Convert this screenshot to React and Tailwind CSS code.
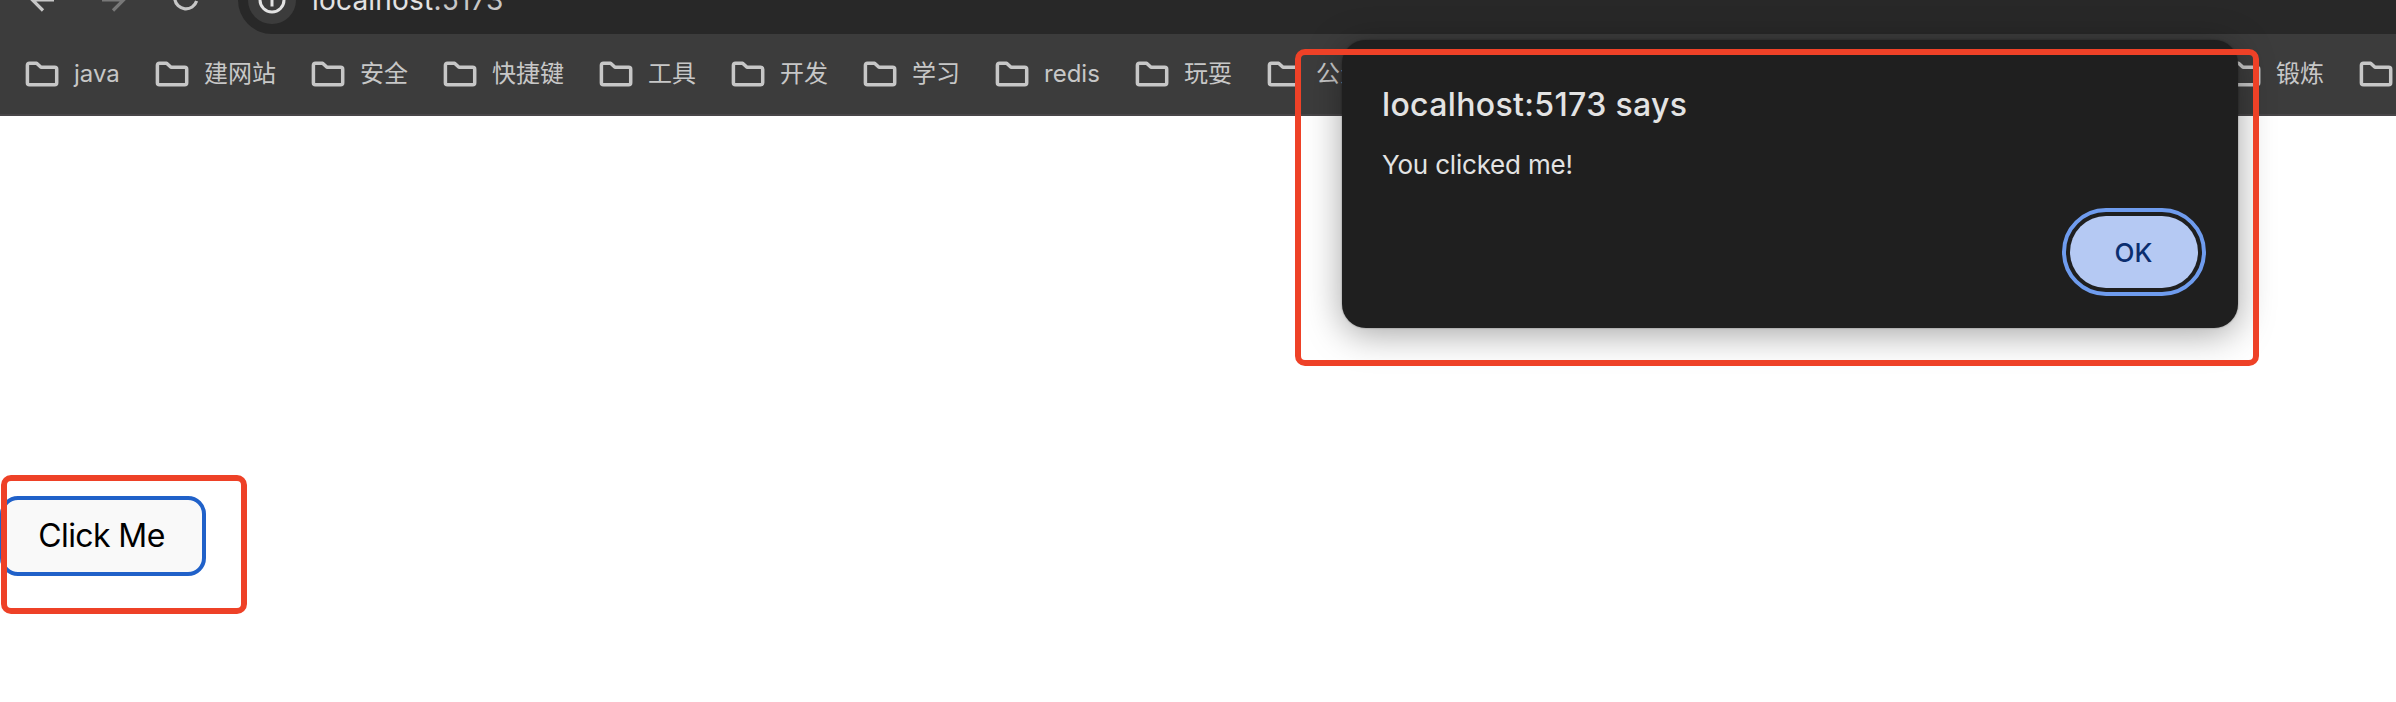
import React from 'react';

const bookmarks = [
  { label: 'java', width: 'w-[46px]' },
  { label: '建网站', width: 'w-[72px]' },
  { label: '安全', width: 'w-[48px]' },
  { label: '快捷键', width: 'w-[72px]' },
  { label: '工具', width: 'w-[48px]' },
  { label: '开发', width: 'w-[48px]' },
  { label: '学习', width: 'w-[48px]' },
  { label: 'redis', width: 'w-[56px]' },
  { label: '玩耍', width: 'w-[48px]' },
  { label: '公众', width: 'w-[48px]' },
];

function Folder() {
  return (
    <svg className="h-[26px] w-[34px] shrink-0" viewBox="0 0 34 26" fill="none" stroke="#c7c7c7" strokeWidth="3.5" strokeLinejoin="round">
      <path d="M4.400 2.200H11.600L16 6.300H29.700Q31.700 6.300 31.700 8.300V21.700Q31.700 23.700 29.700 23.700H4.400Q2.400 23.700 2.400 21.700V4.200Q2.400 2.200 4.400 2.200Z" />
    </svg>
  );
}

function Bookmark({ label, width }) {
  return (
    <div className="flex shrink-0 items-center gap-[15px]">
      <Folder />
      {label && <span className={`${width} shrink-0 whitespace-nowrap text-[24px] leading-[32px]`}>{label}</span>}
    </div>
  );
}

function Toolbar() {
  return (
    <div className="flex h-[34px] items-start overflow-hidden">
      <svg className="h-[34px] w-[238px] shrink-0" viewBox="0 0 238 34" fill="none" strokeWidth="3.2">
        <path d="M54 0H32M43 10.500L32 -0.500L43 -11.500" stroke="#c7c7c7" />
        <path d="M102 0H124M113 10.500L124 -0.500L113 -11.500" stroke="#787878" />
        <path d="M196.600 1A11.200 11.200 0 0 1 174.800 -1" stroke="#c7c7c7" />
      </svg>
      <div className="flex h-[34px] grow items-start rounded-bl-[34px] bg-[#282828] pl-[10px]">
        <svg className="h-[24px] w-[48px] shrink-0" viewBox="0 0 48 24" fill="none">
          <circle cx="24" cy="0" r="24" fill="#3c3c3c" />
          <circle cx="24" cy="0" r="12" stroke="#e3e3e3" strokeWidth="3" />
          <path d="M24 -2V6.500" stroke="#e3e3e3" strokeWidth="3" />
        </svg>
        <div className="-mt-[18px] pl-[16px] text-[28px] leading-[36px] tracking-[0.2px] text-[#c7c7c7]">
          <span className="text-[#e3e3e3]">localhost</span>:5173
        </div>
      </div>
    </div>
  );
}

function Dialog() {
  return (
    <div className="absolute top-[40px] left-[1342px] flex h-[288px] w-[896px] flex-col rounded-[24px] bg-[#1f1f1f] pr-[32px] pl-[40px] text-[#e3e3e3] shadow-[0_6px_36px_rgba(0,0,0,0.36),0_0_2px_rgba(0,0,0,0.4)]">
      <h1 className="mt-[45px] text-[32px] leading-[40px] font-medium tracking-[0.35px] whitespace-nowrap">localhost:5173 says</h1>
      <p className="mt-[22px] text-[26px] leading-[36px] tracking-[-0.2px] whitespace-nowrap">You clicked me!</p>
      <button className="mt-[25px] flex h-[88px] w-[144px] items-center justify-center self-end rounded-full border-4 border-[#6f9cee] p-[4px]">
        <span className="flex h-[72px] w-[128px] items-center justify-center rounded-full bg-[#b5c9f3] pr-px text-[26px] font-medium text-[#0b2e6f]">OK</span>
      </button>
    </div>
  );
}

export default function App() {
  return (
    <div className="relative h-[702px] w-[2396px] overflow-hidden bg-white font-[Inter,'Noto_Sans_CJK_SC',sans-serif]">
      <header className="h-[116px] border-b-2 border-[#484648] bg-[#3c3c3c] text-[#c7c7c7]">
        <Toolbar />
        <nav className="flex h-[80px] items-center gap-[35px] pl-[25px]">
          {bookmarks.map((b) => (
            <Bookmark key={b.label} {...b} />
          ))}
          <div className="w-[793px] shrink-0" />
          <Bookmark label="锻炼" width="w-[48px]" />
          <Bookmark />
        </nav>
      </header>
      <main className="pt-[380px]">
        <button className="flex h-[80px] w-[206px] items-center justify-center rounded-[18px] border-4 border-[#2061c9] bg-[#f9f9f9] pr-[3px] pb-px text-[32px] tracking-[-0.6px] whitespace-nowrap text-black">Click Me</button>
      </main>
      <Dialog />
      <div className="absolute top-[49px] left-[1295px] h-[317px] w-[964px] rounded-[10px] border-[6px] border-[#ee4127]" />
      <div className="absolute top-[474.5px] left-px h-[139px] w-[246px] rounded-[10px] border-[6px] border-[#ee4127]" />
    </div>
  );
}
